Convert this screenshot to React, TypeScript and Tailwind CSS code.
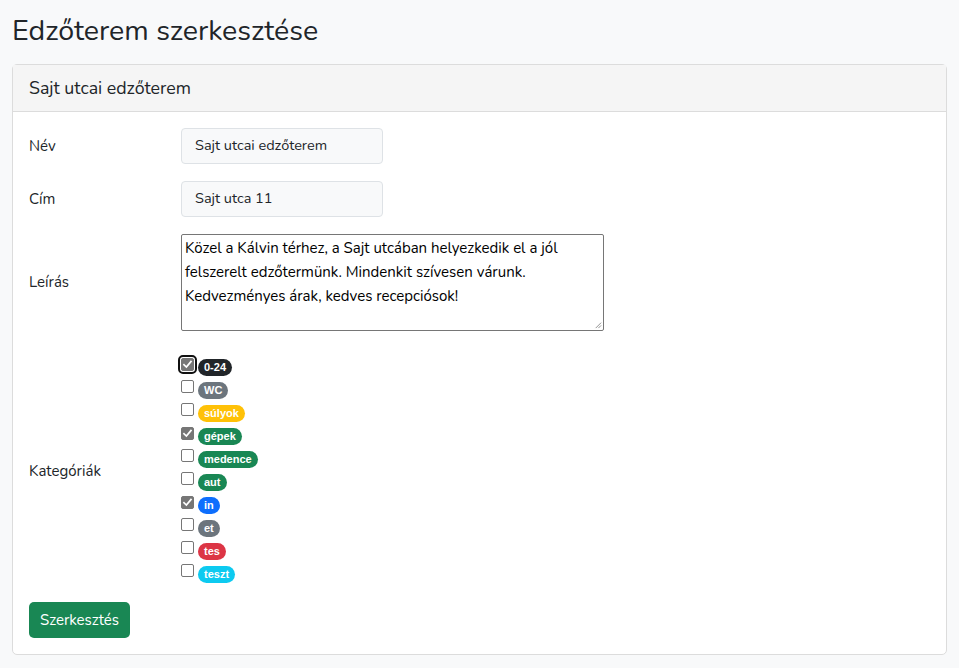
import React from "react";

const cats: { name: string; color: string; checked: boolean }[] = [
  { name: "0-24", color: "bg-[#212529]", checked: true },
  { name: "WC", color: "bg-[#6c757d]", checked: false },
  { name: "súlyok", color: "bg-[#ffc107]", checked: false },
  { name: "gépek", color: "bg-[#198754]", checked: true },
  { name: "medence", color: "bg-[#198754]", checked: false },
  { name: "aut", color: "bg-[#198754]", checked: false },
  { name: "in", color: "bg-[#0d6efd]", checked: true },
  { name: "et", color: "bg-[#6c757d]", checked: false },
  { name: "tes", color: "bg-[#dc3545]", checked: false },
  { name: "teszt", color: "bg-[#0dcaf0]", checked: false },
];

function Box({ checked, focus }: { checked: boolean; focus?: boolean }) {
  return (
    <span
      className={
        "relative inline-flex h-[13px] w-[13px] shrink-0 items-center justify-center rounded-[2px] border " +
        (checked ? "border-[#767676] bg-[#767676]" : "border-[#767676] bg-white") +
        (focus ? " outline outline-2 outline-offset-1 outline-[#101010]" : "")
      }
    >
      {checked && (
        <svg viewBox="0 0 12 12" className="h-[11px] w-[11px]">
          <path d="M2.2 6.3 L4.8 8.8 L9.8 2.8" fill="none" stroke="white" strokeWidth="1.9" strokeLinecap="square" />
        </svg>
      )}
    </span>
  );
}

export default function App() {
  return (
    <div
      className="min-h-screen bg-[#f8f9fa] px-3 text-[#212529]"
      style={{ fontFamily: "Nunito, Lato, 'Noto Sans', sans-serif" }}
    >
      <h2 className="pt-[13px] pb-[15px] text-[28.6px] leading-[36px] font-normal">Edzőterem szerkesztése</h2>
      <div className="rounded-[5px] border border-[#dcdcdc] bg-white">
        <div className="flex h-[47px] items-center border-b border-[#dcdcdc] bg-[#f5f5f5] px-4 text-[17.8px]">
          Sajt utcai edzőterem
        </div>
        <div className="px-4 pt-[16px] pb-4 text-[15px]">
          <div className="flex items-center">
            <div className="w-[152px]">Név</div>
            <div className="flex h-[36px] w-[202px] items-center rounded-[4px] border border-[#dee2e6] bg-[#f8f9fa] px-[13px] text-[14.5px]">
              Sajt utcai edzőterem
            </div>
          </div>
          <div className="mt-[17px] flex items-center">
            <div className="w-[152px]">Cím</div>
            <div className="flex h-[36px] w-[202px] items-center rounded-[4px] border border-[#dee2e6] bg-[#f8f9fa] px-[13px] text-[14.5px]">
              Sajt utca 11
            </div>
          </div>
          <div className="mt-[17px] flex items-center">
            <div className="w-[152px]">Leírás</div>
            <div className="relative h-[97px] w-[423px] rounded-[2px] border border-[#767676] bg-white px-[3px] py-[1px] text-[15px] leading-[24px] text-black">
              Közel a Kálvin térhez, a Sajt utcában helyezkedik el a jól felszerelt edzőtermünk. Mindenkit szívesen
              várunk. Kedvezményes árak, kedves recepciósok!
              <svg viewBox="0 0 10 10" className="absolute right-[1px] bottom-[1px] h-[9px] w-[9px]">
                <path d="M9 3 L3 9 M9 6 L6 9" stroke="#888" strokeWidth="1" />
              </svg>
            </div>
          </div>
          <div className="mt-[25px] flex items-center">
            <div className="w-[152px]">Kategóriák</div>
            <div className="flex flex-col">
              {cats.map((c, i) => (
                <div key={c.name} className="flex h-[23px] items-center gap-[4px]">
                  <span className="-mt-[5px]">
                    <Box checked={c.checked} focus={i === 0} />
                  </span>
                  <span
                    className={
                      "inline-flex h-[17px] items-center rounded-full px-[6px] text-[11px] font-bold leading-none text-white " +
                      c.color
                    }
                    style={{ fontFamily: "'Liberation Sans', Arial, sans-serif" }}
                  >
                    {c.name}
                  </span>
                </div>
              ))}
            </div>
          </div>
          <button className="mt-[16px] flex h-[36px] w-[101px] items-center justify-center rounded-[5px] bg-[#198754] text-[15px] text-white">
            Szerkesztés
          </button>
        </div>
      </div>
    </div>
  );
}
